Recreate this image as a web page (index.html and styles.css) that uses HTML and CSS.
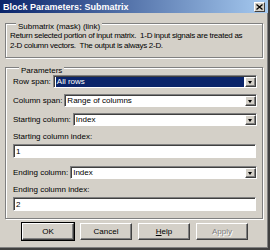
FILE: index.html
```html
<!DOCTYPE html>
<html lang="en">
<head>
    <meta charset="UTF-8">
    <title>Block Parameters: Submatrix</title>
    <link rel="stylesheet" href="styles.css">
</head>
<body>
    <div class="window">
        <div class="titlebar">
            <span class="title">Block Parameters: Submatrix</span>
            <span class="close">
                <svg width="7" height="6" viewBox="0 0 7 6"><path d="M0.5 0.5 L6.5 5.5 M6.5 0.5 L0.5 5.5" stroke="#000" stroke-width="1.3"/></svg>
            </span>
        </div>
        <div class="content">
            <div class="group desc">
                <span class="legend">Submatrix (mask) (link)</span>
                <p>Return selected portion of input matrix.&nbsp; 1-D input signals are treated as<br>2-D column vectors.&nbsp; The output is always 2-D.</p>
            </div>
            <div class="group params">
                <span class="legend">Parameters</span>
                <div class="row">
                    <span class="label">Row span:</span>
                    <div class="combo selected"><span class="value">All rows</span><span class="arrow"></span></div>
                </div>
                <div class="row">
                    <span class="label">Column span:</span>
                    <div class="combo"><span class="value">Range of columns</span><span class="arrow"></span></div>
                </div>
                <div class="row">
                    <span class="label">Starting column:</span>
                    <div class="combo"><span class="value">Index</span><span class="arrow"></span></div>
                </div>
                <div class="caption">Starting column index:</div>
                <div class="edit">1</div>
                <div class="row">
                    <span class="label">Ending column:</span>
                    <div class="combo"><span class="value">Index</span><span class="arrow"></span></div>
                </div>
                <div class="caption">Ending column index:</div>
                <div class="edit">2</div>
            </div>
            <div class="buttons">
                <button class="btn default">OK</button>
                <button class="btn">Cancel</button>
                <button class="btn"><u>H</u>elp</button>
                <button class="btn disabled">Apply</button>
            </div>
        </div>
    </div>
</body>
</html>
```

FILE: styles.css
```css
body {
    margin: 0;
    font-family: 'Liberation Sans', Arial, sans-serif;
    font-size: 8px;
    line-height: 10px;
    color: #000000;
    background: #d4d0c8;
}
.window {
    width: 270px;
    height: 250px;
    box-sizing: border-box;
    background: #d4d0c8;
    border-right: 2px solid #404040;
    border-bottom: 2px solid #404040;
    box-shadow: inset -1px -1px 0 #808080;
    overflow: hidden;
}
.titlebar {
    height: 13px;
    display: flex;
    align-items: center;
    justify-content: space-between;
    padding: 0 3px 0 3px;
    background: linear-gradient(to right, #0a246a, #a6caf0);
}
.title {
    color: #ffffff;
    font-weight: bold;
    font-size: 9px;
}
.close {
    width: 9px;
    height: 8px;
    display: flex;
    align-items: center;
    justify-content: center;
    background: #d4d0c8;
    border: 1px solid;
    border-color: #ffffff #404040 #404040 #ffffff;
}
.content {
    padding: 10px 5px 0 5px;
}
.group {
    border: 1px solid #808080;
    box-shadow: inset 1px 1px 0 #ffffff, 1px 1px 0 #ffffff;
}
.legend {
    display: table;
    height: 9px;
    line-height: 9px;
    margin: -5px 0 0 6px;
    padding: 0 2px;
    background: #d4d0c8;
}
.desc {
    padding: 3px 4px 6px 4px;
}
.desc p {
    margin: 0;
    white-space: nowrap;
    letter-spacing: -0.28px;
}
.params {
    margin-top: 9px;
    padding: 3px 5px 7px 7px;
}
.row {
    display: flex;
    align-items: center;
    margin-bottom: 6px;
}
.label {
    margin-right: 2px;
    white-space: nowrap;
}
.combo {
    flex: 1;
    height: 13px;
    box-sizing: border-box;
    display: flex;
    align-items: center;
    background: #ffffff;
    border: 1px solid;
    border-color: #808080 #ffffff #ffffff #808080;
    box-shadow: inset 1px 1px 0 #404040;
    padding: 1px 0 0 2px;
}
.combo .value {
    flex: 1;
}
.combo.selected .value {
    background: #0a246a;
    color: #ffffff;
    align-self: stretch;
    display: flex;
    align-items: center;
    margin-right: 1px;
    padding-left: 1px;
}
.arrow {
    width: 11px;
    height: 10px;
    box-sizing: border-box;
    background: #d4d0c8;
    border: 1px solid;
    border-color: #ffffff #404040 #404040 #ffffff;
    box-shadow: inset -1px -1px 0 #808080;
    position: relative;
}
.arrow::after {
    content: '';
    position: absolute;
    left: 2px;
    top: 3px;
    border-left: 2.5px solid transparent;
    border-right: 2.5px solid transparent;
    border-top: 3px solid #000000;
}
.caption {
    margin: 0 0 2px 0;
}
.edit {
    height: 14px;
    box-sizing: border-box;
    background: #ffffff;
    border: 1px solid;
    border-color: #808080 #ffffff #ffffff #808080;
    box-shadow: inset 1px 1px 0 #404040;
    padding: 2px 0 0 2px;
    margin-right: 1px;
    margin-bottom: 8px;
}
.edit:last-child {
    margin-bottom: 0;
}
.buttons {
    display: flex;
    gap: 6px;
    padding: 4px 0 0 17px;
}
.btn {
    width: 52px;
    height: 17px;
    font-family: 'Liberation Sans', Arial, sans-serif;
    font-size: 8px;
    background: #d4d0c8;
    border: 1px solid;
    border-color: #ffffff #404040 #404040 #ffffff;
    box-shadow: inset -1px -1px 0 #808080;
    padding: 0;
    color: #000000;
}
.btn.default {
    outline: 1px solid #000000;
}
.btn.disabled {
    color: #808080;
    text-shadow: 1px 1px 0 #ffffff;
}
```
